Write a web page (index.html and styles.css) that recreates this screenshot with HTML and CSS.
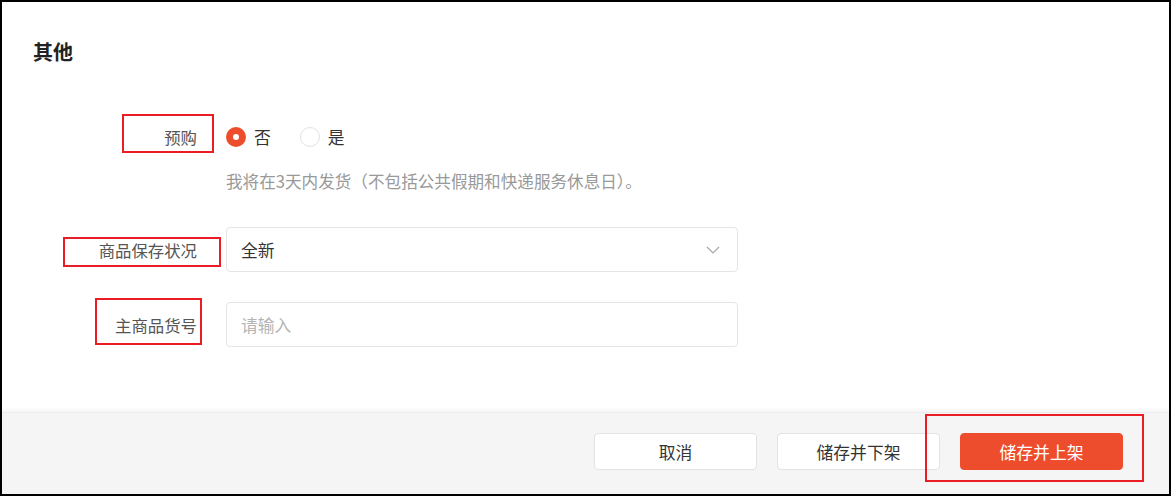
FILE: index.html
```html
<!DOCTYPE html>
<html lang="zh-CN">
<head>
<meta charset="utf-8">
<title>其他</title>
<link rel="stylesheet" href="styles.css">
</head>
<body>
<div class="frame">
  <div class="content">
    <h2 class="title">其他</h2>
    <div class="form">
      <div class="item item-radio">
        <div class="label">预购</div>
        <div class="control radios">
          <label class="radio-opt"><span class="radio checked"></span><span class="radio-text">否</span></label>
          <label class="radio-opt"><span class="radio"></span><span class="radio-text">是</span></label>
        </div>
      </div>
      <div class="item item-help">
        <div class="label"></div>
        <div class="help">我将在3天内发货（不包括公共假期和快递服务休息日）。</div>
      </div>
      <div class="item item-select">
        <div class="label">商品保存状况</div>
        <div class="control box select">
          <span class="value">全新</span>
          <svg class="chevron" width="14" height="8" viewBox="0 0 14 8"><path d="M1 1 L7 7 L13 1" fill="none" stroke="#a6a6a6" stroke-width="1.2"/></svg>
        </div>
      </div>
      <div class="item item-input">
        <div class="label">主商品货号</div>
        <div class="control box input"><span class="placeholder">请输入</span></div>
      </div>
    </div>
  </div>
  <div class="footer">
    <button class="btn">取消</button>
    <button class="btn">储存并下架</button>
    <button class="btn btn-primary">储存并上架</button>
  </div>
  <div class="mark mark-1"></div>
  <div class="mark mark-2"></div>
  <div class="mark mark-3"></div>
  <div class="mark mark-4"></div>
</div>
</body>
</html>
```
FILE: styles.css
```css
html, body {
  margin: 0;
  padding: 0;
  background: #fff;
}
body {
  font-family: "Noto Sans CJK SC", "Noto Sans", "Liberation Sans", sans-serif;
  color: #333;
}
.frame {
  position: relative;
  width: 1171px;
  height: 496px;
  box-sizing: border-box;
  border: 2px solid #000;
  display: flex;
  flex-direction: column;
  background: #fff;
}
.content {
  flex: 1;
  padding: 36px 31px 0 31px;
}
.title {
  margin: 0;
  font-size: 20px;
  line-height: 28px;
  font-weight: 700;
  color: #222;
}
.form {
  margin-top: 51px;
}
.item {
  display: flex;
  align-items: center;
}
.label {
  width: 164px;
  flex: none;
  text-align: right;
  font-size: 16.4px;
  color: #555;
  margin-right: 29px;
  line-height: 24px;
}
.item-radio {
  height: 40px;
}
.radios {
  display: flex;
  align-items: center;
}
.radio-opt {
  display: flex;
  align-items: center;
  margin-right: 29px;
}
.radio {
  width: 20px;
  height: 20px;
  box-sizing: border-box;
  border-radius: 50%;
  border: 1px solid #e2e2e2;
  background: #fff;
  margin-right: 8px;
}
.radio.checked {
  border: 7px solid #ee4d2d;
}
.radio-text {
  font-size: 16.8px;
  line-height: 24px;
  color: #333;
}
.item-help {
  margin-top: 12px;
}
.help {
  font-size: 16.6px;
  line-height: 24px;
  color: #999;
}
.item-select {
  margin-top: 34px;
}
.item-input {
  margin-top: 30px;
}
.box {
  width: 512px;
  height: 45px;
  box-sizing: border-box;
  border: 1px solid #e5e5e5;
  border-radius: 4px;
  display: flex;
  align-items: center;
  padding: 0 17px 0 14px;
  font-size: 16.8px;
}
.select {
  justify-content: space-between;
}
.value {
  color: #333;
}
.placeholder {
  color: #b5b5b5;
}
.footer {
  height: 82px;
  flex: none;
  box-sizing: border-box;
  background: #f5f5f5;
  box-shadow: 0 -2px 4px rgba(0, 0, 0, 0.05);
  border-top: 1px solid #ececec;
  display: flex;
  justify-content: flex-end;
  align-items: flex-start;
  padding: 20px 46px 0 0;
  gap: 20px;
}
.btn {
  width: 163px;
  height: 37px;
  box-sizing: border-box;
  border: 1px solid #e3e3e3;
  border-radius: 4px;
  background: #fff;
  color: #333;
  font-family: inherit;
  font-size: 16.8px;
  padding: 0;
}
.btn-primary {
  background: #ee4d2d;
  border-color: #ee4d2d;
  color: #fff;
}
.mark {
  position: absolute;
  box-sizing: border-box;
  border: 2px solid #ec1c24;
}
.mark-1 { left: 120px; top: 112px; width: 92px; height: 39px; }
.mark-2 { left: 61px; top: 235px; width: 158px; height: 30px; }
.mark-3 { left: 93px; top: 296px; width: 107px; height: 47px; }
.mark-4 { left: 923px; top: 412px; width: 219px; height: 68px; }
```
